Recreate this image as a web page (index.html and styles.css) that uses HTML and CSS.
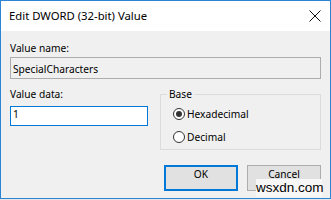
FILE: index.html
```html
<!DOCTYPE html>
<html lang="en">
<head>
    <meta charset="UTF-8">
    <meta name="viewport" content="width=device-width, initial-scale=1.0">
    <title>Edit DWORD (32-bit) Value</title>
    <link rel="stylesheet" href="styles.css">
</head>
<body>

    <div class="dialog">
        <div class="titlebar">
            <span class="title">Edit DWORD (32-bit) Value</span>
            <svg class="close" width="12" height="12" viewBox="0 0 12 12">
                <path d="M0.5 0.5 L11.5 11.5 M11.5 0.5 L0.5 11.5" />
            </svg>
        </div>

        <div class="content">
            <div class="label">Value name:</div>
            <div class="field readonly">SpecialCharacters</div>

            <div class="row">
                <div class="data-col">
                    <div class="label">Value data:</div>
                    <div class="field active">1</div>
                </div>

                <div class="groupbox">
                    <div class="legend">Base</div>
                    <div class="radio-row"><span class="radio checked"></span>Hexadecimal</div>
                    <div class="radio-row"><span class="radio"></span>Decimal</div>
                </div>
            </div>

            <div class="buttons">
                <button class="btn default">OK</button>
                <button class="btn">Cancel</button>
            </div>
        </div>
    </div>

    <div class="watermark">wsxdn.com</div>

</body>
</html>
```

FILE: styles.css
```css
body {
    margin: 0;
    width: 331px;
    height: 200px;
    background: #e6e6e6;
    font-family: "Noto Sans", sans-serif;
    font-size: 10.2px;
    line-height: 14px;
    color: #000;
    position: relative;
    overflow: hidden;
}

.dialog {
    width: 331px;
    height: 199px;
    box-sizing: border-box;
    border: 1px solid #2b84d4;
    display: flex;
    flex-direction: column;
}

.titlebar {
    height: 30px;
    background: #fff;
    display: flex;
    align-items: center;
    justify-content: space-between;
    padding: 0 9px 0 8px;
}

.title {
    font-size: 11.3px;
}

.close path {
    stroke: #111;
    stroke-width: 1;
    fill: none;
}

.content {
    flex: 1;
    background: #f0f0f0;
    padding: 10px 9px 0 9px;
}

.field {
    box-sizing: border-box;
    padding: 0 2px;
    white-space: nowrap;
}

.content > .label + .field {
    margin-top: 2px;
}

.readonly {
    height: 22px;
    padding-top: 4px;
    border: 1px solid #adadad;
    background: #f0f0f0;
}

.active {
    height: 20px;
    margin-top: 5px;
    border: 1px solid #0078d7;
    background: #fff;
}

.row {
    display: flex;
    gap: 12px;
    margin-top: 8px;
}

.data-col {
    width: 138px;
}

.groupbox {
    flex: 1;
    margin-top: 7px;
    border: 1px solid #dcdcdc;
    padding-bottom: 1px;
}

.legend {
    width: fit-content;
    margin: -8px 0 0 6px;
    padding: 0 2px;
    background: #f0f0f0;
}

.radio-row {
    display: flex;
    align-items: center;
    height: 23px;
    padding-left: 12px;
}

.legend + .radio-row {
    margin-top: 1px;
}

.radio {
    width: 12px;
    height: 12px;
    box-sizing: border-box;
    border: 1px solid #333;
    border-radius: 50%;
    background: #fff;
    margin-right: 2px;
    display: flex;
    align-items: center;
    justify-content: center;
}

.radio.checked::after {
    content: "";
    width: 6px;
    height: 6px;
    border-radius: 50%;
    background: #333;
}

.buttons {
    display: flex;
    justify-content: flex-end;
    gap: 9px;
    margin-top: 15px;
}

.btn {
    width: 74px;
    padding: 1px 0 9px;
    border: 1px solid #adadad;
    background: #e1e1e1;
    font-family: inherit;
    font-size: inherit;
    line-height: 14px;
    color: #000;
}

.btn.default {
    border-color: #0078d7;
    box-shadow: inset 0 0 0 1px #0078d7;
}

.watermark {
    position: absolute;
    left: 256px;
    top: 179px;
    width: 66px;
    height: 18px;
    background: #f7f7f7;
    font-family: "Liberation Sans", Arial, sans-serif;
    font-size: 13.5px;
    line-height: 18px;
    text-align: center;
}
```
